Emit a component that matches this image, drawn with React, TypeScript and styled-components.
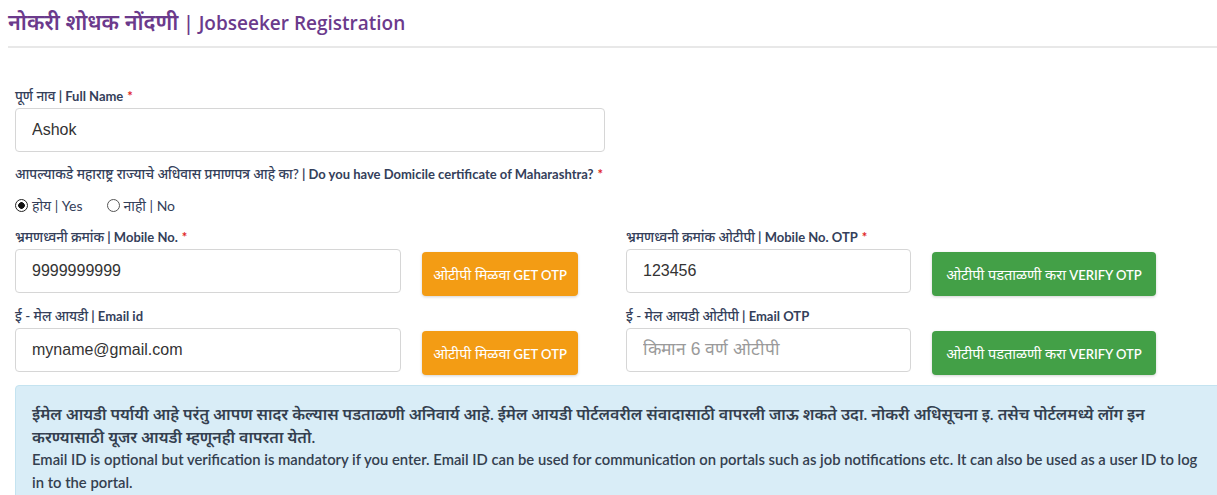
import React from "react";
import styled, { createGlobalStyle } from "styled-components";

const Global = createGlobalStyle`
  html, body { margin: 0; padding: 0; background: #fff; overflow: hidden; }
  body { font-family: Lato, "Noto Sans", sans-serif; }
  * { box-sizing: border-box; }
`;

const Page = styled.div`
  width: 1240px;
  padding: 0 0 0 8px;
`;

/* Marathi (Devanagari) run: the reference font draws Devanagari larger than Latin */
const Mr = styled.span<{ $scale?: number; $weight?: number }>`
  font-size: ${(p) => p.$scale ?? 1}em;
  ${(p) => (p.$weight ? `font-weight: ${p.$weight};` : "")}
`;

const Title = styled.h2`
  margin: 0;
  padding-top: 8px;
  height: 46px;
  font-family: "Open Sans", "Noto Sans", sans-serif;
  font-weight: 600;
  font-size: 19px;
  line-height: 28px;
  color: #6b3a8c;
`;

const Rule = styled.hr`
  margin: 0;
  border: 0;
  border-top: 2px solid #e8e8e8;
  width: 1209px;
`;

const Form = styled.div`
  padding: 39px 0 0 7px;
  display: flex;
  flex-direction: column;
`;

const Label = styled.label`
  display: block;
  font-family: Lato, "Noto Sans", sans-serif;
  font-weight: 700;
  font-size: 13px;
  line-height: 18px;
  color: #34405a;
  height: 18px;
  margin-bottom: 3px;
  white-space: nowrap;
`;

const Star = styled.span`
  color: #e02424;
  margin-left: 4px;
`;

const TextInput = styled.input<{ $w: number }>`
  width: ${(p) => p.$w}px;
  height: 44px;
  border: 1px solid #d6d6d6;
  border-radius: 4px;
  padding: 0 16px;
  font-family: "Liberation Sans", Arial, sans-serif;
  font-size: 16px;
  color: #333;
  background: #fff;
  outline: none;
  &::placeholder { color: #9a9a9a; font-size: 17.5px; }
`;

const Field = styled.div``;

const Question = styled(Label)`
  margin-top: 13px;
  margin-bottom: 12px;
`;

const RadioRow = styled.div`
  display: flex;
  align-items: center;
  gap: 24px;
  height: 20px;
  margin-bottom: 13px;
`;

const RadioLabel = styled.label`
  display: inline-flex;
  align-items: center;
  gap: 4px;
  font-family: Lato, "Noto Sans", sans-serif;
  font-size: 14px;
  color: #34405a;
`;

const Radio = styled.input`
  appearance: none;
  margin: 0;
  width: 13px;
  height: 13px;
  border: 1px solid #555;
  border-radius: 50%;
  background: #fff;
  &:checked {
    border-color: #222;
    background: radial-gradient(circle, #111 0 3px, #fff 3.6px);
  }
`;

const Halves = styled.div<{ $mb?: number }>`
  display: grid;
  grid-template-columns: 611px 611px;
  margin-bottom: ${(p) => p.$mb ?? 0}px;
`;

const InputRow = styled.div`
  display: flex;
  align-items: flex-start;
  gap: 21px;
`;

const OtpButton = styled.button<{ $tone: "orange" | "green"; $w: number }>`
  margin-top: 3px;
  width: ${(p) => p.$w}px;
  height: 44px;
  border: 0;
  border-radius: 4px;
  background: ${(p) => (p.$tone === "orange" ? "#f39c14" : "#43a047")};
  color: #fff;
  font-family: Lato, "Noto Sans", sans-serif;
  font-weight: 600;
  font-size: 13px;
  box-shadow: 0 1px 3px rgba(0, 0, 0, 0.18);
  cursor: pointer;
  padding: 0;
  white-space: nowrap;
`;

const Alert = styled.div`
  margin-top: 10px;
  width: 1220px;
  background: #d9edf7;
  border: 1px solid #c4e3f0;
  border-radius: 4px;
  padding: 16px 16px 12px 16px;
  font-family: Lato, "Noto Sans", sans-serif;
  font-weight: 600;
  line-height: 23px;
  color: #34404f;
`;

const P = styled.p<{ $size: number; $w: number }>`
  margin: 0;
  width: ${(p) => p.$w}px;
  font-size: ${(p) => p.$size}px;
`;

export default function App() {
  return (
    <Page>
      <Global />
      <Title>
        <Mr $scale={1.14}>नोकरी शोधक नोंदणी</Mr> | Jobseeker Registration
      </Title>
      <Rule />
      <Form>
        <Field>
          <Label>
            <Mr $scale={1.04} $weight={500}>पूर्ण नाव</Mr> | Full Name<Star>*</Star>
          </Label>
          <TextInput $w={590} defaultValue="Ashok" />
        </Field>
        <Question>
          <Mr $scale={1.04} $weight={500}>आपल्याकडे महाराष्ट्र राज्याचे अधिवास प्रमाणपत्र आहे का?</Mr> | Do you have Domicile certificate of Maharashtra?
          <Star>*</Star>
        </Question>
        <RadioRow>
          <RadioLabel>
            <Radio type="radio" name="dom" defaultChecked />
            होय | Yes
          </RadioLabel>
          <RadioLabel>
            <Radio type="radio" name="dom" />
            नाही | No
          </RadioLabel>
        </RadioRow>
        <Halves $mb={11}>
          <Field>
            <Label>
              <Mr $scale={1.04} $weight={500}>भ्रमणध्वनी क्रमांक</Mr> | Mobile No.<Star>*</Star>
            </Label>
            <InputRow>
              <TextInput $w={386} defaultValue="9999999999" />
              <OtpButton $tone="orange" $w={156}>
                <Mr $scale={1.12} $weight={400}>ओटीपी मिळवा</Mr> GET OTP
              </OtpButton>
            </InputRow>
          </Field>
          <Field>
            <Label>
              <Mr $scale={1.04} $weight={500}>भ्रमणध्वनी क्रमांक ओटीपी</Mr> | Mobile No. OTP<Star>*</Star>
            </Label>
            <InputRow>
              <TextInput $w={285} defaultValue="123456" />
              <OtpButton $tone="green" $w={224}>
                <Mr $scale={1.12} $weight={400}>ओटीपी पडताळणी करा</Mr> VERIFY OTP
              </OtpButton>
            </InputRow>
          </Field>
        </Halves>
        <Halves>
          <Field>
            <Label>
              <Mr $scale={1.04} $weight={500}>ई - मेल आयडी</Mr> | Email id
            </Label>
            <InputRow>
              <TextInput $w={386} defaultValue="myname@gmail.com" />
              <OtpButton $tone="orange" $w={156}>
                <Mr $scale={1.12} $weight={400}>ओटीपी मिळवा</Mr> GET OTP
              </OtpButton>
            </InputRow>
          </Field>
          <Field>
            <Label>
              <Mr $scale={1.04} $weight={500}>ई - मेल आयडी ओटीपी</Mr> | Email OTP
            </Label>
            <InputRow>
              <TextInput $w={285} placeholder="किमान 6 वर्ण ओटीपी" />
              <OtpButton $tone="green" $w={224}>
                <Mr $scale={1.12} $weight={400}>ओटीपी पडताळणी करा</Mr> VERIFY OTP
              </OtpButton>
            </InputRow>
          </Field>
        </Halves>
        <Alert>
          <P $size={16} $w={1140}>
            ईमेल आयडी पर्यायी आहे परंतु आपण सादर केल्यास पडताळणी अनिवार्य आहे. ईमेल आयडी पोर्टलवरील संवादासाठी वापरली जाऊ शकते उदा. नोकरी अधिसूचना इ. तसेच पोर्टलमध्ये लॉग इन करण्यासाठी यूजर आयडी म्हणूनही वापरता येतो.
          </P>
          <P $size={14.8} $w={1170}>
            Email ID is optional but verification is mandatory if you enter. Email ID can be used for communication on portals such as job notifications etc. It can also be used as a user ID to log in to the portal.
          </P>
        </Alert>
      </Form>
    </Page>
  );
}
